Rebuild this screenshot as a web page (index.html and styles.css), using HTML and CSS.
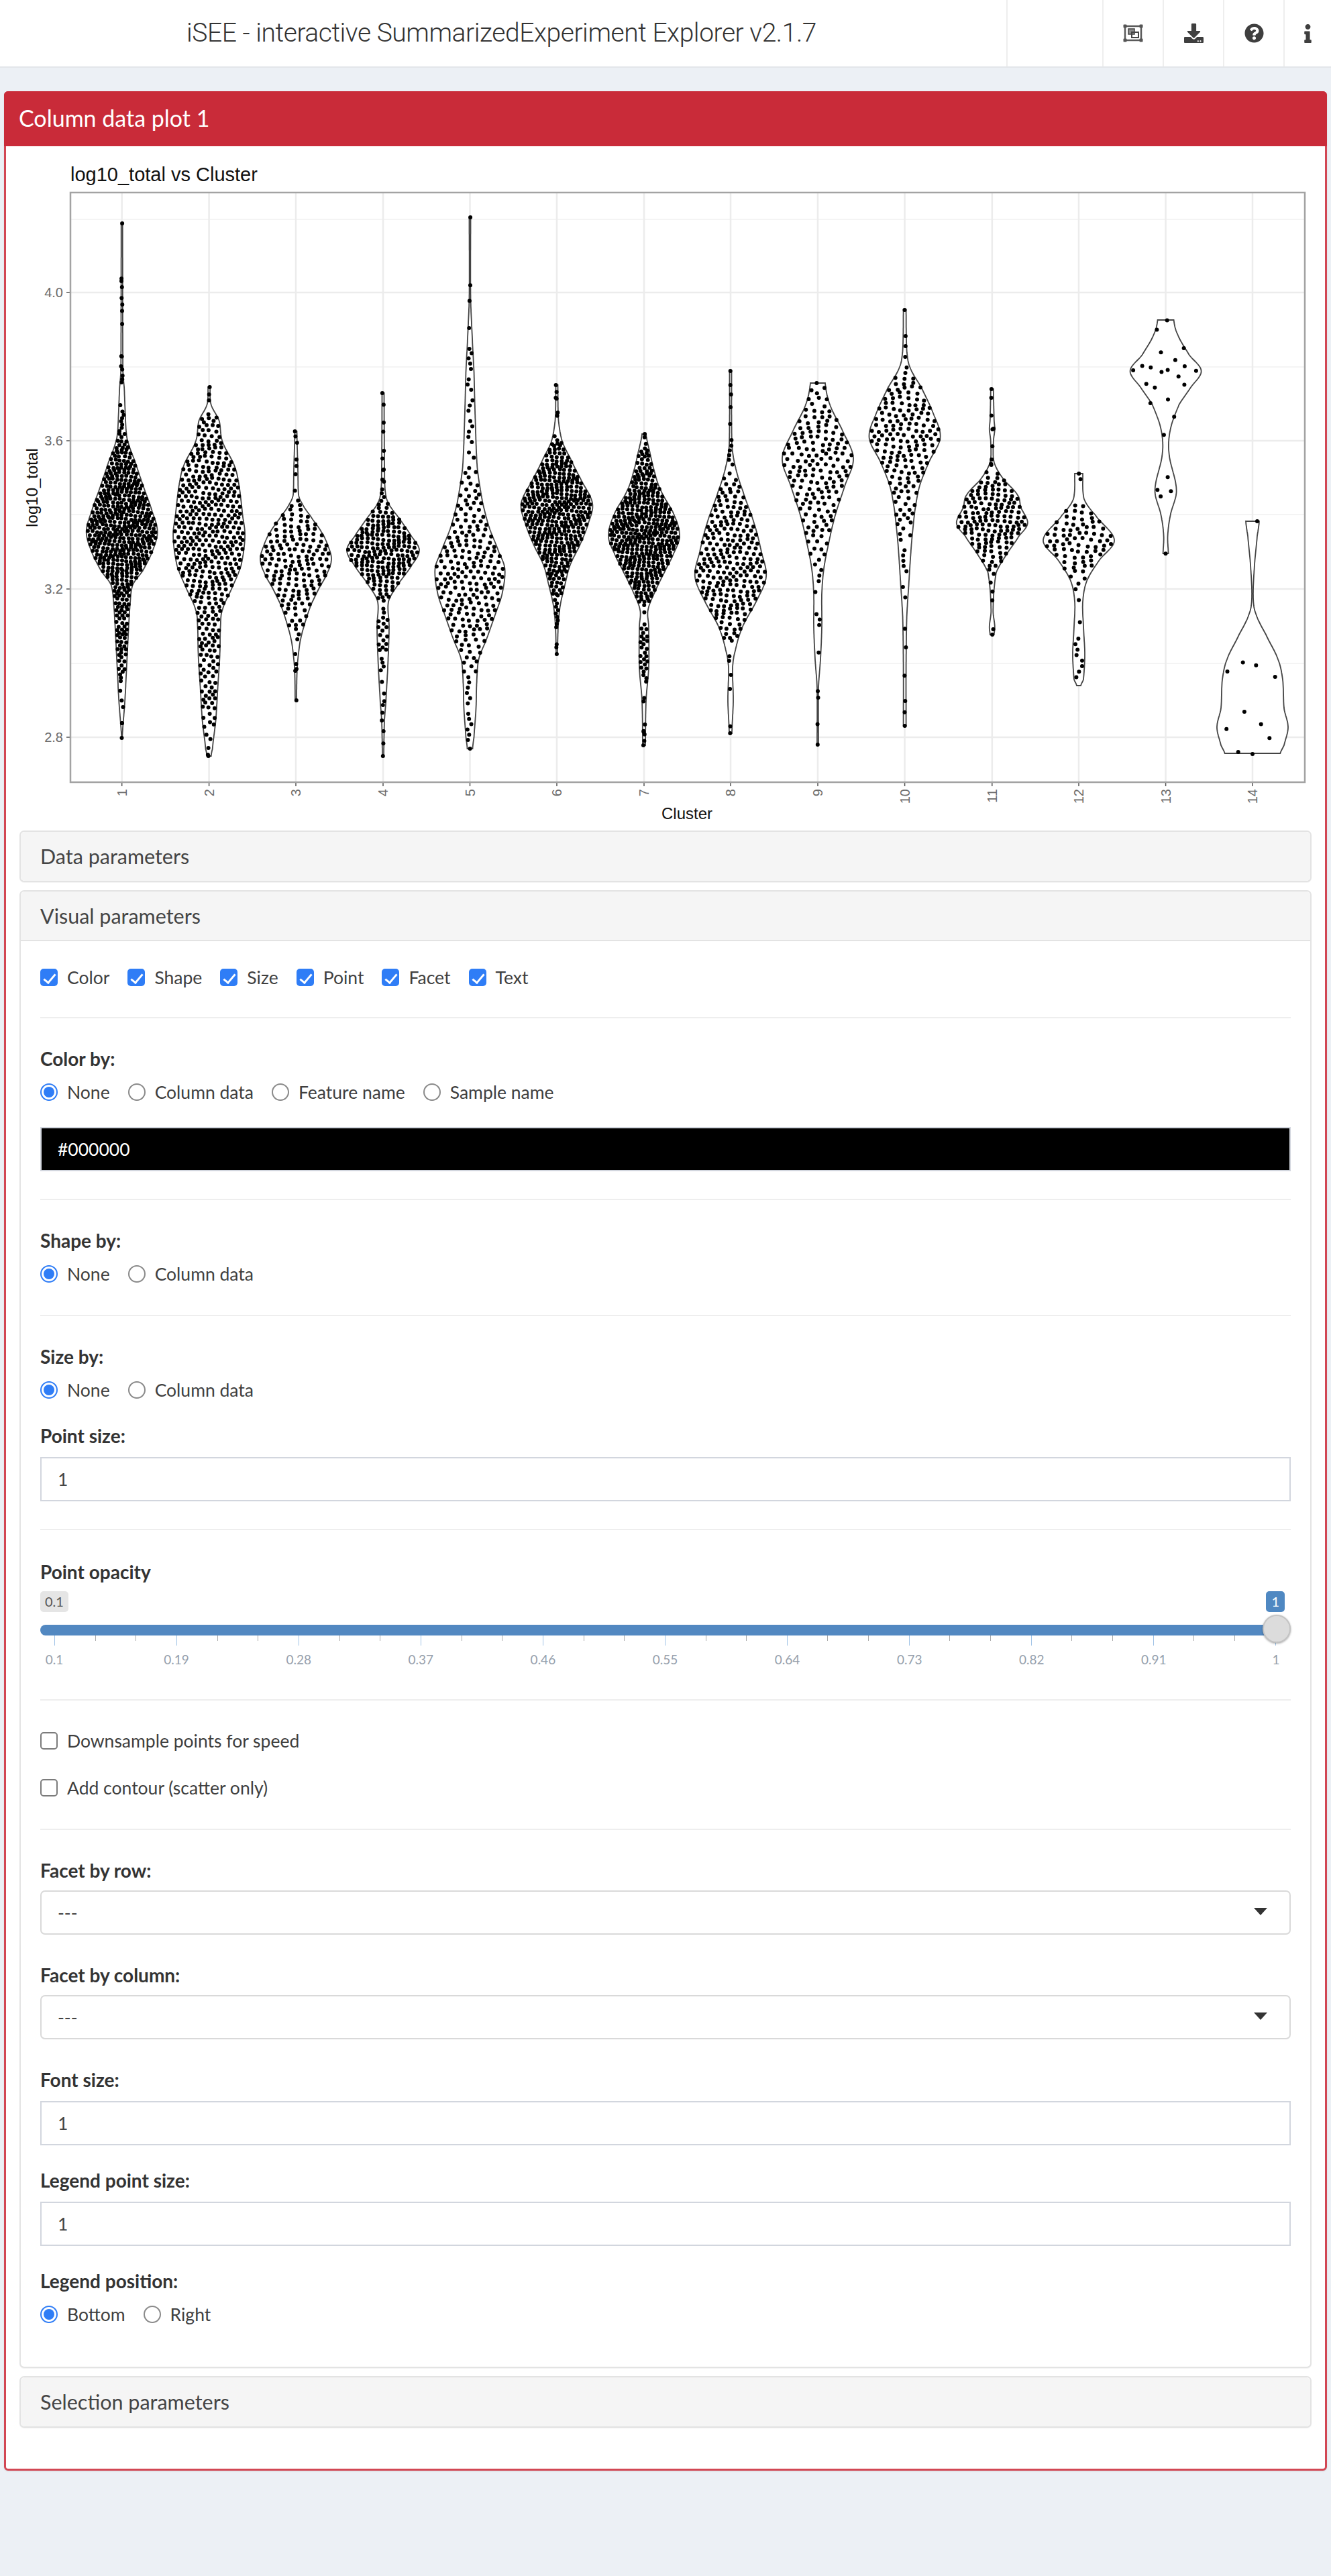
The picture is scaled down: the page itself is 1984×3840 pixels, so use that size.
FILE: index.html
```html
<!DOCTYPE html>
<html lang="en">
<head>
    <meta charset="UTF-8">
    <title>iSEE - interactive SummarizedExperiment Explorer v2.1.7</title>
    <link rel="stylesheet" href="styles.css">
</head>
<body>
    <header class="topbar">
        <div class="brand">iSEE - interactive SummarizedExperiment Explorer v2.1.7</div>
        <div class="nav-spacer"></div>
        <a class="nav-item">
            <svg class="icon-group" viewBox="0 0 30 27">
                <rect x="3" y="3" width="24" height="21" fill="none" stroke="#5a5a5a" stroke-width="2.5"/>
                <rect x="0.5" y="0.5" width="5" height="5" rx="1" fill="#555"/>
                <rect x="24.5" y="0.5" width="5" height="5" rx="1" fill="#555"/>
                <rect x="0.5" y="21.5" width="5" height="5" rx="1" fill="#555"/>
                <rect x="24.5" y="21.5" width="5" height="5" rx="1" fill="#555"/>
                <rect x="8" y="7" width="9" height="8" fill="#8a8a8a" stroke="#444" stroke-width="1.5"/>
                <rect x="13" y="12" width="10" height="8" fill="none" stroke="#444" stroke-width="2"/>
            </svg>
        </a>
        <a class="nav-item">
            <svg class="icon" viewBox="0 0 512 512"><path d="M216 0h80c13.3 0 24 10.7 24 24v168h87.7c17.8 0 26.7 21.5 14.1 34.1L269.7 378.3c-7.5 7.5-19.8 7.5-27.3 0L90.1 226.1c-12.6-12.6-3.7-34.1 14.1-34.1H192V24c0-13.3 10.7-24 24-24zm296 376v112c0 13.3-10.7 24-24 24H24c-13.3 0-24-10.7-24-24V376c0-13.3 10.7-24 24-24h146.7l49 49c20.1 20.1 52.5 20.1 72.6 0l49-49H488c13.3 0 24 10.7 24 24zm-124 88c0-11-9-20-20-20s-20 9-20 20 9 20 20 20 20-9 20-20zm64 0c0-11-9-20-20-20s-20 9-20 20 9 20 20 20 20-9 20-20z"/></svg>
        </a>
        <a class="nav-item">
            <svg class="icon" viewBox="0 0 512 512"><path d="M504 256c0 136.997-111.043 248-248 248S8 392.997 8 256C8 119.083 119.043 8 256 8s248 111.083 248 248zM262.655 90c-54.497 0-89.255 22.957-116.549 63.758-3.536 5.286-2.353 12.415 2.715 16.258l34.699 26.31c5.205 3.947 12.621 3.008 16.665-2.122 17.864-22.658 30.113-35.797 57.303-35.797 20.429 0 45.698 13.148 45.698 32.958 0 14.976-12.363 22.667-32.534 33.976C247.128 238.528 216 254.941 216 296v4c0 6.627 5.373 12 12 12h56c6.627 0 12-5.373 12-12v-1.333c0-28.462 83.186-29.647 83.186-106.667 0-58.002-60.165-102-116.531-102zM256 338c-25.365 0-46 20.635-46 46 0 25.364 20.635 46 46 46s46-20.636 46-46c0-25.365-20.635-46-46-46z"/></svg>
        </a>
        <a class="nav-item nav-last">
            <svg class="icon-info" viewBox="0 0 192 512"><path d="M20 424.229h20V279.771H20c-11.046 0-20-8.954-20-20V212c0-11.046 8.954-20 20-20h112c11.046 0 20 8.954 20 20v212.229h20c11.046 0 20 8.954 20 20V492c0 11.046-8.954 20-20 20H20c-11.046 0-20-8.954-20-20v-47.771c0-11.046 8.954-20 20-20zM96 0C56.235 0 24 32.235 24 72s32.235 72 72 72 72-32.235 72-72S135.764 0 96 0z"/></svg>
        </a>
    </header>

    <main class="content">
        <section class="panel">
            <h2 class="panel-title">Column data plot 1</h2>
            <div class="panel-body">
                <svg id="plot" class="plot" viewBox="9 218 1966 1008"></svg>

                <div class="box collapsed">
                    <div class="box-head">Data parameters</div>
                </div>

                <div class="box">
                    <div class="box-head">Visual parameters</div>
                    <div class="box-body">
                        <div class="section section-first">
                            <div class="options">
                                <label class="option"><input type="checkbox" checked>Color</label>
                                <label class="option"><input type="checkbox" checked>Shape</label>
                                <label class="option"><input type="checkbox" checked>Size</label>
                                <label class="option"><input type="checkbox" checked>Point</label>
                                <label class="option"><input type="checkbox" checked>Facet</label>
                                <label class="option"><input type="checkbox" checked>Text</label>
                            </div>
                        </div>

                        <div class="section">
                            <div class="field-label">Color by:</div>
                            <div class="options">
                                <label class="option"><input type="radio" name="color" checked>None</label>
                                <label class="option"><input type="radio" name="color">Column data</label>
                                <label class="option"><input type="radio" name="color">Feature name</label>
                                <label class="option"><input type="radio" name="color">Sample name</label>
                            </div>
                            <input class="text-input color-input" type="text" value="#000000">
                        </div>

                        <div class="section">
                            <div class="field-label">Shape by:</div>
                            <div class="options">
                                <label class="option"><input type="radio" name="shape" checked>None</label>
                                <label class="option"><input type="radio" name="shape">Column data</label>
                            </div>
                        </div>

                        <div class="section">
                            <div class="field-label">Size by:</div>
                            <div class="options">
                                <label class="option"><input type="radio" name="size" checked>None</label>
                                <label class="option"><input type="radio" name="size">Column data</label>
                            </div>
                            <div class="field-label field-next field-tight">Point size:</div>
                            <input class="text-input" type="text" value="1">
                        </div>

                        <div class="section section-slider">
                            <div class="field-label">Point opacity</div>
                            <div class="slider">
                                <div class="slider-pills">
                                    <span class="pill pill-min">0.1</span>
                                    <span class="pill pill-max">1</span>
                                </div>
                                <div class="slider-track"></div>
                                <div class="slider-handle"></div>
                                <div id="sliderTicks" class="slider-ticks"></div>
                                <div id="sliderLabels" class="slider-labels"></div>
                            </div>
                        </div>

                        <div class="section">
                            <div class="stack">
                                <label class="option"><input type="checkbox">Downsample points for speed</label>
                                <label class="option"><input type="checkbox">Add contour (scatter only)</label>
                            </div>
                        </div>

                        <div class="section section-last">
                            <div class="field-label">Facet by row:</div>
                            <div class="select-box">---</div>
                            <div class="field-label field-next field-wide">Facet by column:</div>
                            <div class="select-box">---</div>
                            <div class="field-label field-next field-wide">Font size:</div>
                            <input class="text-input" type="text" value="1">
                            <div class="field-label field-next">Legend point size:</div>
                            <input class="text-input" type="text" value="1">
                            <div class="field-label field-next">Legend position:</div>
                            <div class="options">
                                <label class="option"><input type="radio" name="legend" checked>Bottom</label>
                                <label class="option"><input type="radio" name="legend">Right</label>
                            </div>
                        </div>
                    </div>
                </div>

                <div class="box collapsed">
                    <div class="box-head">Selection parameters</div>
                </div>
            </div>
        </section>
    </main>

    <script src="script.js"></script>
</body>
</html>
```

FILE: styles.css
```css
* {
    box-sizing: border-box;
}
body {
    margin: 0;
    background-color: #ecf0f5;
    font-family: "Lato", "Open Sans", sans-serif;
    font-size: 26.5px;
    color: #3f3f3f;
    min-height: 3840px;
}

/* top bar */
.topbar {
    display: flex;
    height: 101px;
    background-color: #fff;
    border-bottom: 2px solid #e3e6ea;
}
.brand {
    width: 1500px;
    padding-left: 278px;
    line-height: 99px;
    font-family: "Roboto", "Liberation Sans", sans-serif;
    font-weight: 300;
    font-size: 39px;
    letter-spacing: -0.45px;
    color: #333;
    white-space: nowrap;
}
.nav-spacer {
    width: 143px;
    border-left: 2px solid #eeeeee;
}
.nav-item {
    display: flex;
    align-items: center;
    justify-content: center;
    width: 90px;
    border-left: 2px solid #eeeeee;
}
.nav-last {
    width: 71px;
}
.icon {
    width: 29px;
    height: 29px;
    fill: #3f3f3f;
}
.icon-group {
    width: 30px;
    height: 27px;
}
.icon-info {
    width: 11px;
    height: 28px;
    fill: #3f3f3f;
}

/* red panel */
.content {
    padding: 35px 6px 0;
}
.panel {
    border: 3px solid #d24754;
    border-radius: 6px;
    background-color: #fff;
    box-shadow: 0 1px 2px rgba(0, 0, 0, 0.1);
}
.panel-title {
    margin: -3px -3px 0;
    height: 82px;
    padding-left: 22px;
    line-height: 80px;
    font-size: 34px;
    font-weight: 400;
    color: #fff;
    background-color: #c92b39;
    border-radius: 6px 6px 0 0;
}
.panel-body {
    padding: 0 20px 61px;
}
.plot {
    display: block;
    width: 1966px;
    height: 1008px;
    margin: 0 -20px 12px;
    font-family: "Liberation Sans", Arial, sans-serif;
}

/* collapsible boxes */
.box {
    margin-top: 12px;
    border: 2px solid #e3e3e3;
    border-radius: 7px;
    background-color: #fff;
    box-shadow: 0 1px 1px rgba(0, 0, 0, 0.05);
}
.box-head {
    height: 74px;
    padding-left: 29px;
    line-height: 72px;
    font-size: 30.5px;
    color: #444;
    background-color: #f5f5f5;
    border-bottom: 2px solid #e3e3e3;
    border-radius: 6px 6px 0 0;
}
.collapsed .box-head {
    height: 73px;
    border-bottom: 0;
    border-radius: 6px;
}
.box-body {
    padding: 0 29px 58px;
}
.section {
    padding: 40px 0 41px;
    border-bottom: 2px solid #eeeeee;
}
.section-first {
    padding: 34px 0 39px;
}
.section-slider {
    padding-top: 42px;
}
.section-last {
    padding-bottom: 0;
    border-bottom: 0;
}

/* form controls */
.field-label {
    height: 40px;
    margin-bottom: 10px;
    line-height: 40px;
    font-size: 28px;
    font-weight: 700;
    color: #333;
}
.field-next {
    margin-top: 32px;
}
.field-tight {
    margin-top: 28px;
}
.field-wide {
    margin-top: 40px;
}
.field-next + .text-input {
    margin-top: 12px;
}
.options {
    display: flex;
    gap: 27px;
}
.stack {
    display: flex;
    flex-direction: column;
    gap: 30px;
}
.option {
    display: flex;
    align-items: center;
    gap: 14px;
    height: 40px;
    white-space: nowrap;
}
.option input {
    appearance: none;
    position: relative;
    flex: none;
    width: 26px;
    height: 26px;
    margin: 0;
    border: 2px solid #7b7b7b;
    background-color: #fff;
}
.option input[type="checkbox"] {
    border-radius: 5px;
}
.option input[type="radio"] {
    border-radius: 50%;
    border-color: #8a8a8a;
}
.option input[type="checkbox"]:checked {
    background-color: #2f7df6;
    border-color: #2f7df6;
}
.option input[type="checkbox"]:checked::after {
    content: "";
    position: absolute;
    left: 7px;
    top: 2px;
    width: 7px;
    height: 15px;
    border: solid #fff;
    border-width: 0 3px 3px 0;
    transform: rotate(40deg);
}
.option input[type="radio"]:checked {
    border-color: #2f7df6;
}
.option input[type="radio"]:checked::after {
    content: "";
    position: absolute;
    left: 3px;
    top: 3px;
    width: 16px;
    height: 16px;
    border-radius: 50%;
    background-color: #2f7df6;
}
.text-input {
    display: block;
    width: 100%;
    height: 66px;
    padding: 0 24px;
    border: 2px solid #d2d6de;
    font: inherit;
    color: #444;
    background-color: #fff;
}
.color-input {
    margin-top: 32px;
    color: #fff;
    background-color: #000;
}
.select-box {
    position: relative;
    height: 66px;
    padding: 0 24px;
    line-height: 62px;
    border: 2px solid #d9d9d9;
    border-radius: 7px;
    color: #444;
    background-color: #fff;
}
.select-box::after {
    content: "";
    position: absolute;
    right: 33px;
    top: 24px;
    border: solid transparent;
    border-width: 11px 10px 0;
    border-top-color: #333;
}

/* point opacity slider */
.slider {
    position: relative;
    height: 120px;
    margin-top: -1px;
}
.slider-pills {
    display: flex;
    justify-content: space-between;
    height: 50px;
    padding-right: 9px;
    font-size: 20px;
}
.pill {
    height: 31px;
    line-height: 31px;
    padding: 0 7px;
    border-radius: 5px;
    color: #555;
    background-color: #e5e5e5;
}
.pill-max {
    color: #fff;
    background-color: #4f88c2;
    padding: 0 8px;
}
.slider-track {
    height: 16px;
    margin-right: 21px;
    border-radius: 8px 0 0 8px;
    background-color: #5288c1;
}
.slider-handle {
    position: absolute;
    right: 0;
    top: 35px;
    width: 42px;
    height: 42px;
    border-radius: 50%;
    border: 2px solid #c4c4c4;
    background-color: #dcdcdc;
    box-shadow: 0 1px 3px rgba(0, 0, 0, 0.35);
}
.slider-ticks,
.slider-labels {
    display: flex;
    justify-content: space-between;
    margin: 0 22px 0 21px;
}
.slider-ticks {
    height: 15px;
}
.tick {
    width: 1px;
    height: 8px;
    background-color: #a9a9a9;
}
.tick-major {
    height: 15px;
    background-color: #9fc2e6;
}
.slider-labels {
    height: 30px;
    margin-top: 6px;
    line-height: 30px;
    font-size: 19px;
    color: #96a0ac;
}
.slider-label {
    display: flex;
    justify-content: center;
    width: 0;
}
```

FILE: script.js
```js
// violin outlines: [y, half width] in page pixels, x is the centre of the cluster
// d is the dot pitch of the swarm, ends are the stray dots in the tails
const violins = [
    { c: 181.7, d: 5.9, ends: [333, 419, 428, 531, 546, 560, 1100, 1078], w: [[333,1],[554,1.5],[578,3.5],[640,6],[658,9],[689,20],[725,32],[762,45],[793,53],[823,45],[851,31],[872,16],[903,12],[934,10],[995,7],[1044,4.5],[1100,0.5]] },
    { c: 311.6, d: 8, ends: [577, 588, 1127, 1125], w: [[577,1.5],[603,3],[627,15],[658,20],[695,38],[725,45],[768,50],[799,53.5],[842,48],[872,36],[909,20],[934,17],[976,16],[1025,13],[1074,10],[1117,5],[1128,3]] },
    { c: 441, d: 9, ends: [643, 660, 685, 707, 1044, 1000], w: [[643,1.5],[701,3],[738,4],[750,9],[768,21],[793,38],[811,47],[833,53],[854,47],[878,34],[903,22],[934,12],[958,6],[995,2],[1044,1]] },
    { c: 571, d: 7, ends: [586, 630, 672, 700, 715, 1127, 1090, 1074], w: [[586,1.5],[689,2],[731,3],[750,8],[774,25],[799,42],[820,54],[842,43],[872,22],[897,8],[934,9],[995,7],[1050,4],[1074,2],[1127,1]] },
    { c: 700.5, d: 9.5, ends: [324, 489, 520, 1116], w: [[324,1],[444,1],[517,4],[554,6],[627,8],[698,11],[750,19],[787,29],[823,43],[848,52],[885,48],[921,36],[952,25],[983,13],[1019,10],[1056,9],[1099,6],[1116,4]] },
    { c: 830, d: 6.2, ends: [574, 593, 615, 975, 965, 930], w: [[574,1.5],[627,2.5],[658,8],[683,20],[713,35],[750,53],[780,47],[811,35],[842,20],[872,12],[903,5],[934,2],[975,1]] },
    { c: 960, d: 6, ends: [647, 1111, 1091], w: [[647,3],[676,9],[701,15],[731,25],[768,45],[799,53],[823,45],[854,30],[878,18],[909,6],[934,7],[995,7],[1044,3],[1111,2]] },
    { c: 1089, d: 8.5, ends: [553, 607, 632, 656, 1093], w: [[553,1.5],[664,2],[695,7],[731,18],[780,35],[823,46],[860,53],[897,38],[934,18],[970,7],[995,3],[1044,4],[1093,2]] },
    { c: 1219, d: 10, ends: [571, 1110, 1040], w: [[571,11],[603,18],[640,36],[683,53],[725,40],[768,26],[811,16],[848,9],[885,6],[934,6],[983,4],[1025,1],[1110,1]] },
    { c: 1348.6, d: 9.5, ends: [462, 516, 532, 1082, 1045, 965], w: [[462,2],[523,3],[548,8],[578,25],[615,42],[652,53],[689,36],[725,22],[762,15],[811,10],[872,6],[921,3],[995,2],[1082,2]] },
    { c: 1478.8, d: 8, ends: [580, 640, 693, 946, 938], w: [[580,2],[627,3],[640,4],[658,2],[689,3],[713,16],[738,38],[756,43],[780,53],[799,40],[829,20],[854,6],[909,1.5],[934,4],[946,3]] },
    { c: 1608, d: 10, ends: [706], w: [[706,6],[744,8],[768,25],[805,53],[836,30],[866,12],[897,6],[934,7],[976,9],[1013,7],[1022,3]] },
    { c: 1737.6, w: [[477,12],[499,18],[529,35],[553,53],[578,37],[603,20],[640,7],[676,5],[731,16],[768,7],[799,3],[826,4]],
      dots: [[1739.7,477.4],[1724.4,491.5],[1730.5,525.2],[1764.6,519],[1751.9,536.8],[1702.6,545.4],[1715.3,547.8],[1765.9,546],[1689.1,552.1],[1731.4,554.6],[1740.6,551.5],[1782.9,552.7],[1756.7,561.3],[1708.7,572.3],[1721.4,577.8],[1765.4,573.5],[1741,595.6],[1714.8,601.1],[1750.2,621.3],[1734.9,648.3],[1740.6,711.3],[1725.3,730.3],[1745.4,732.2],[1730.1,740.1],[1737.5,825.3]] },
    { c: 1867, w: [[777,10],[799,7],[842,3],[891,1],[915,5],[946,20],[983,38],[1013,45],[1056,47],[1084,53],[1111,47],[1124,41]],
      dots: [[1874,777],[1829.5,1001],[1852.7,987.5],[1872.3,991.8],[1900.7,1009],[1854.9,1061],[1828.2,1086.7],[1879.7,1079.4],[1892.3,1100.2],[1845.7,1121],[1867,1124]] }
];

const plot = document.getElementById('plot');

function add(name, attrs, text) {
    const el = document.createElementNS('http://www.w3.org/2000/svg', name);
    for (const key in attrs) el.setAttribute(key, attrs[key]);
    if (text) el.textContent = text;
    plot.appendChild(el);
    return el;
}

// small seeded generator so the dots land the same way on every load
function seeded(seed) {
    return function () {
        seed = (seed + 0x6D2B79F5) | 0;
        let t = Math.imul(seed ^ (seed >>> 15), 1 | seed);
        t = (t + Math.imul(t ^ (t >>> 7), 61 | t)) ^ t;
        return ((t ^ (t >>> 14)) >>> 0) / 4294967296;
    };
}

function halfWidth(w, y) {
    if (y <= w[0][0]) return w[0][1];
    for (let i = 1; i < w.length; i++) {
        if (y <= w[i][0]) {
            const p0 = w[Math.max(i - 2, 0)], p1 = w[i - 1], p2 = w[i], p3 = w[Math.min(i + 1, w.length - 1)];
            const t = (y - p1[0]) / (p2[0] - p1[0]);
            const m1 = (p2[1] - p0[1]) / 2, m2 = (p3[1] - p1[1]) / 2;
            const value = p1[1] + t * (m1 + t * (3 * (p2[1] - p1[1]) - 2 * m1 - m2 + t * (m1 + m2 - 2 * (p2[1] - p1[1]))));
            return Math.max(value, 0.5);
        }
    }
    return w[w.length - 1][1];
}

function outline(v) {
    const y0 = v.w[0][0], y1 = v.w[v.w.length - 1][0];
    const leftSide = [], rightSide = [];
    for (let y = y0; y <= y1; y += 2) {
        const h = halfWidth(v.w, y);
        leftSide.push((v.c - h).toFixed(1) + ',' + y);
        rightSide.unshift((v.c + h).toFixed(1) + ',' + y);
    }
    return leftSide.concat(rightSide).join(' ');
}

// swarm: staggered rows stretched to the width of the violin
function scatter(v, seed) {
    const rnd = seeded(seed);
    const y0 = v.w[0][0], y1 = v.w[v.w.length - 1][0];
    const rowStep = v.d * 0.82, pitch = v.d * 1.12;
    const dots = v.ends.map(function (y) {
        return [v.c + (rnd() - 0.5) * 2 * Math.min(halfWidth(v.w, y), 2), y];
    });
    let row = 0;
    for (let y = y0 + rowStep; y < y1 - 1; y += rowStep, row++) {
        const h = halfWidth(v.w, y);
        const fits = 2 * h / pitch;
        if (fits < 2) {
            if (rnd() < fits / 2.2) dots.push([v.c + (rnd() - 0.5) * h * 1.2, y]);
            continue;
        }
        const span = 2 * (h - 2.5);
        const count = Math.max(Math.round(fits), 2);
        const gap = span / (count - 1);
        const shifted = row % 2 === 1;
        const total = shifted ? count - 1 : count;
        for (let i = 0; i < total; i++) {
            const x = v.c - span / 2 + (i + (shifted ? 0.5 : 0)) * gap + (rnd() - 0.5) * gap * 0.3;
            const wave = Math.sin(x * 0.09 + row) * rowStep * 0.28;
            const limit = h - 2;
            dots.push([Math.min(Math.max(x, v.c - limit), v.c + limit), y + wave + (rnd() - 0.5) * 1.5]);
        }
    }
    return dots;
}

const panelLeft = 105, panelRight = 1945, panelTop = 287, panelBottom = 1166;
const yMajor = [[436, '4.0'], [657, '3.6'], [878, '3.2'], [1099, '2.8']];
const yMinor = [327, 547, 767, 989];

yMinor.forEach(function (y) {
    add('line', { x1: panelLeft, x2: panelRight, y1: y, y2: y, stroke: '#f0f0f0', 'stroke-width': 1.5 });
});
yMajor.forEach(function (t) {
    add('line', { x1: panelLeft, x2: panelRight, y1: t[0], y2: t[0], stroke: '#ececec', 'stroke-width': 2.5 });
    add('line', { x1: panelLeft - 6, x2: panelLeft, y1: t[0], y2: t[0], stroke: '#555', 'stroke-width': 1.5 });
    add('text', { x: panelLeft - 11, y: t[0] + 7, 'text-anchor': 'end', 'font-size': 20, fill: '#6b6b6b' }, t[1]);
});

violins.forEach(function (v, i) {
    const label = String(i + 1);
    add('line', { x1: v.c, x2: v.c, y1: panelTop, y2: panelBottom, stroke: '#ececec', 'stroke-width': 2.5 });
    add('line', { x1: v.c, x2: v.c, y1: panelBottom, y2: panelBottom + 6, stroke: '#555', 'stroke-width': 1.5 });
    add('text', { transform: 'translate(' + (v.c + 7) + ' 1176) rotate(-90)', 'text-anchor': 'end', 'font-size': 20, fill: '#6b6b6b' }, label);
});

violins.forEach(function (v, i) {
    add('polygon', { points: outline(v), fill: '#fff', stroke: '#444', 'stroke-width': 1.8 });
    const dots = v.dots || scatter(v, 17 + i * 31);
    dots.forEach(function (p) {
        add('circle', { cx: p[0].toFixed(1), cy: p[1].toFixed(1), r: 3, fill: '#000' });
    });
});

add('rect', { x: panelLeft, y: panelTop, width: panelRight - panelLeft, height: panelBottom - panelTop, fill: 'none', stroke: '#a3a3a3', 'stroke-width': 2.5 });
add('text', { x: 105, y: 270, 'font-size': 29, fill: '#111' }, 'log10_total vs Cluster');
add('text', { x: 1024, y: 1221, 'text-anchor': 'middle', 'font-size': 24, fill: '#111' }, 'Cluster');
add('text', { transform: 'translate(56 727) rotate(-90)', 'text-anchor': 'middle', 'font-size': 24, fill: '#111' }, 'log10_total');

// slider scale: a major tick every third, labels on the majors
const sliderValues = ['0.1', '0.19', '0.28', '0.37', '0.46', '0.55', '0.64', '0.73', '0.82', '0.91', '1'];
const ticksEl = document.getElementById('sliderTicks');
const labelsEl = document.getElementById('sliderLabels');
for (let i = 0; i <= 30; i++) {
    const tick = document.createElement('span');
    tick.className = i % 3 === 0 ? 'tick tick-major' : 'tick';
    ticksEl.appendChild(tick);
}
sliderValues.forEach(function (value) {
    const label = document.createElement('span');
    label.className = 'slider-label';
    label.textContent = value;
    labelsEl.appendChild(label);
});
```
